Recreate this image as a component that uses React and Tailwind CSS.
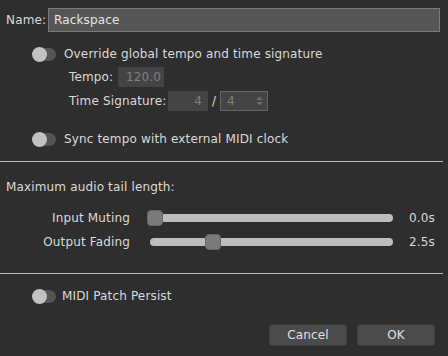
import React from "react";

function Toggle() {
  return (
    <div className="relative w-[24px] h-[15px] shrink-0">
      <div className="absolute left-[2px] right-0 top-[1px] bottom-[1px] rounded-full bg-[#555555]" />
      <div className="absolute left-0 top-0 w-[15px] h-[15px] rounded-full bg-[#c2c2c2]" />
    </div>
  );
}

function Slider({ value, max }) {
  const pct = value / max;
  return (
    <div className="relative w-[246px] h-[16px] shrink-0">
      <div className="absolute left-[3px] right-0 top-[4px] h-[8px] rounded-full bg-[#bdbdbd]" />
      <div
        className="absolute top-0 w-[16px] h-[16px] rounded-[4px] bg-[#7a7a7a] border border-[#666666]"
        style={{ left: `${pct * 230}px` }}
      />
    </div>
  );
}

export default function App() {
  return (
    <div className="w-[448px] h-[356px] bg-[#2e2e2e] text-[#dadada] text-[12px] leading-[16px] tracking-[0.15px] font-['DejaVu_Sans',sans-serif] flex flex-col overflow-hidden">
      {/* Name */}
      <div className="flex items-center pt-[8px] pl-[6px] pr-[8px]">
        <span className="w-[42px] shrink-0">Name:</span>
        <div className="flex-1 h-[24px] bg-[#555555] border border-[#7a7a7a] flex items-center pl-[5px] text-[#e6e6e6]">
          Rackspace
        </div>
      </div>

      {/* Override tempo */}
      <div className="flex items-center mt-[14px] pl-[32px] gap-[8px]">
        <Toggle />
        <span>Override global tempo and time signature</span>
      </div>

      <div className="flex items-center mt-[5px] pl-[69px]">
        <span className="w-[49px] shrink-0">Tempo:</span>
        <div className="w-[46px] h-[20px] bg-[#444444] text-[#7f7f7f] flex items-center pl-[8px]">
          120.0
        </div>
      </div>

      <div className="flex items-center mt-[4px] pl-[69px]">
        <span className="w-[99px] shrink-0">Time Signature:</span>
        <div className="w-[40px] h-[20px] bg-[#444444] text-[#7f7f7f] flex items-center justify-end pr-[6px]">
          4
        </div>
        <span className="w-[12px] text-center">/</span>
        <div className="w-[48px] h-[20px] bg-[#444444] border border-[#666666] text-[#7f7f7f] flex items-center justify-between pl-[6px] pr-[4px]">
          <span>4</span>
          <svg width="7" height="10" viewBox="0 0 7 10">
            <path d="M3.5 0.5 L6.5 4 L0.5 4 Z" fill="#6e6e6e" />
            <path d="M3.5 9.5 L6.5 6 L0.5 6 Z" fill="#6e6e6e" />
          </svg>
        </div>
      </div>

      {/* Sync tempo */}
      <div className="flex items-center mt-[20px] pl-[32px] gap-[8px]">
        <Toggle />
        <span>Sync tempo with external MIDI clock</span>
      </div>

      <div className="mt-[14px] w-[443px] h-px bg-[#bdbdbd]" />

      <div className="mt-[17px] pl-[6px]">Maximum audio tail length:</div>

      <div className="flex items-center mt-[15px]">
        <span className="w-[130px] text-right shrink-0">Input Muting</span>
        <div className="ml-[17px]">
          <Slider value={0} max={10} />
        </div>
        <span className="ml-[16px]">0.0s</span>
      </div>

      <div className="flex items-center mt-[8px]">
        <span className="w-[130px] text-right shrink-0">Output Fading</span>
        <div className="ml-[17px]">
          <Slider value={2.5} max={10} />
        </div>
        <span className="ml-[16px]">2.5s</span>
      </div>

      <div className="mt-[23px] w-[443px] h-px bg-[#bdbdbd]" />

      <div className="flex items-center mt-[14px] pl-[32px] gap-[6px]">
        <Toggle />
        <span>MIDI Patch Persist</span>
      </div>

      <div className="flex justify-end gap-[10px] mt-[20px] pr-[13px]">
        <button className="w-[78px] h-[22px] rounded-[3px] bg-[#4b4b4b] border border-[#3c3c3c] text-[#e0e0e0]">
          Cancel
        </button>
        <button className="w-[78px] h-[22px] rounded-[3px] bg-[#4b4b4b] border border-[#3c3c3c] text-[#e0e0e0]">
          OK
        </button>
      </div>
    </div>
  );
}
